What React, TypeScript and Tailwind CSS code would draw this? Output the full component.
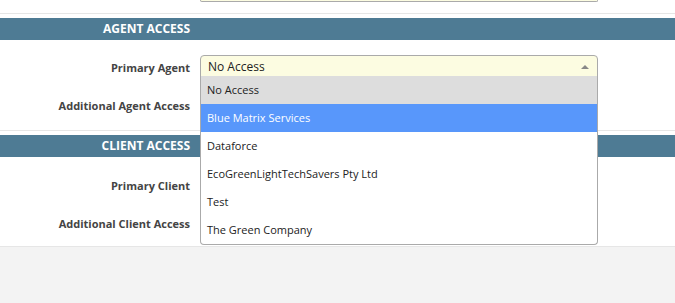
const options = [
  'No Access',
  'Blue Matrix Services',
  'Dataforce',
  'EcoGreenLightTechSavers Pty Ltd',
  'Test',
  'The Green Company',
];

const SectionHeader = ({ title }: { title: string }) => (
  <div className="mt-[4px] flex h-[22px] items-center bg-[#4e7b94]">
    <div className="w-[190px] text-right text-[12px] font-bold text-white">{title}</div>
  </div>
);

const Row = ({ label, children }: { label: string; children?: React.ReactNode }) => (
  <div className="flex h-[38px] items-center">
    <div className="mt-[4px] w-[190px] text-right text-[11px] font-bold text-[#444]">{label}</div>
    <div className="ml-[10px] w-[398px]">{children}</div>
  </div>
);

export default function App() {
  return (
    <div className="flex min-h-[303px] flex-col bg-[#f3f3f3] font-['Open_Sans',sans-serif]">
      <div className="bg-white">
        {/* tail of the previous section */}
        <div className="border-b border-[#e6e6e6] pb-[11px]">
          <div className="ml-[200px] h-[2px] w-[398px] rounded-b-[4px] border-b border-x border-[#aaa] bg-[#fcfce1]" />
        </div>

        <SectionHeader title="AGENT ACCESS" />
        <div className="border-b border-[#e6e6e6] pt-[7px] pb-[7px]">
          <Row label="Primary Agent">
            <div className="relative">
              <div className="flex h-[22px] items-center justify-between rounded-t-[4px] border border-[#aaa] bg-[#fcfce1] pl-[7px] pr-[8px] text-[12px] text-[#222]">
                <span className="mt-[1px]">No Access</span>
                <span className="mt-[1px] h-0 w-0 border-x-[4px] border-b-[4px] border-x-transparent border-b-[#888]" />
              </div>
              <ul className="absolute left-0 top-[21px] z-10 w-[398px] overflow-hidden rounded-b-[4px] border border-t-0 border-[#aaa] bg-white">
                {options.map((o, i) => (
                  <li
                    key={o}
                    className={`flex h-[28px] items-center pl-[6px] pt-[1px] text-[11px] ${
                      i === 0 ? 'bg-[#ddd] text-[#222]' : i === 1 ? 'bg-[#5897fb] text-white' : 'text-[#222]'
                    }`}
                  >
                    {o}
                  </li>
                ))}
              </ul>
            </div>
          </Row>
          <Row label="Additional Agent Access" />
        </div>

        <SectionHeader title="CLIENT ACCESS" />
        <div className="border-b border-[#e6e6e6] pt-[8px] pb-[5px]">
          <Row label="Primary Client" />
          <Row label="Additional Client Access" />
        </div>
      </div>
    </div>
  );
}
